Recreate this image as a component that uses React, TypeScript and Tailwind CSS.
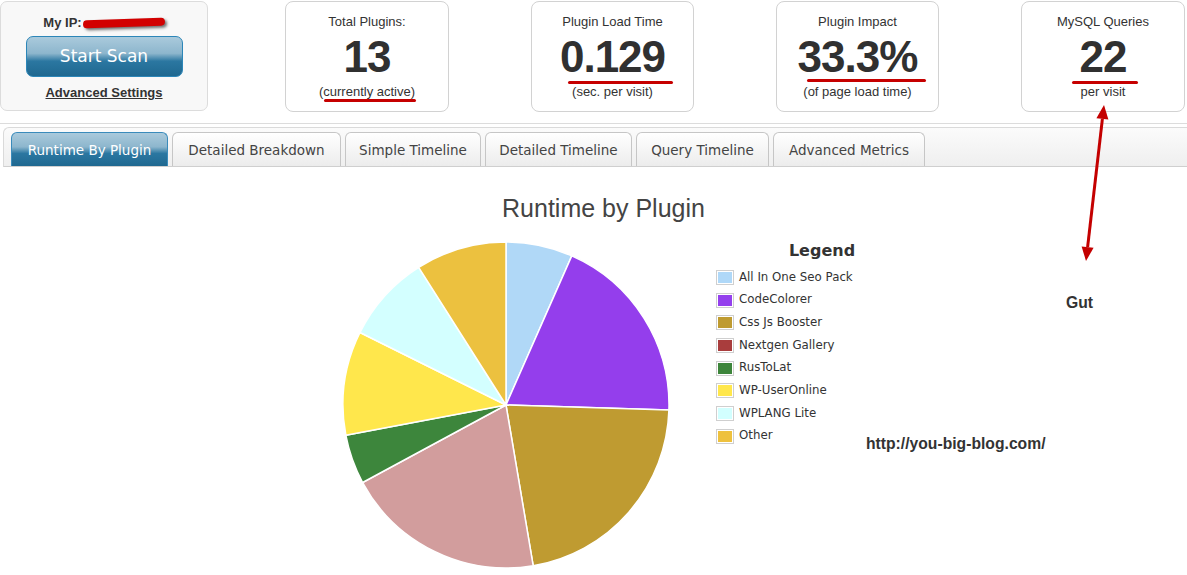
import React from "react";

type Stat = {
  title: string;
  value: string;
  note: string;
  width: string;
  gap: string;
  mark: string;
};

const STATS: Stat[] = [
  { title: "Total Plugins:", value: "13", note: "(currently active)", width: "w-[164px]", gap: "ml-[77px]", mark: "left-[38px] top-[97px] w-[92px]" },
  { title: "Plugin Load Time", value: "0.129", note: "(sec. per visit)", width: "w-[163px]", gap: "ml-[82px]", mark: "left-[36px] top-[79px] w-[105px]" },
  { title: "Plugin Impact", value: "33.3%", note: "(of page load time)", width: "w-[163px]", gap: "ml-[82px]", mark: "left-[30px] top-[77px] w-[119px]" },
  { title: "MySQL Queries", value: "22", note: "per visit", width: "w-[164px]", gap: "ml-[82px]", mark: "left-[50px] top-[79px] w-[66px]" },
];

const TABS = [
  { label: "Runtime By Plugin", w: "w-[157px]" },
  { label: "Detailed Breakdown", w: "w-[169px]" },
  { label: "Simple Timeline", w: "w-[136px]" },
  { label: "Detailed Timeline", w: "w-[147px]" },
  { label: "Query Timeline", w: "w-[133px]" },
  { label: "Advanced Metrics", w: "w-[152px]" },
];

// end angle of each slice, clockwise from 12 o'clock
const SLICES = [
  { name: "All In One Seo Pack", color: "#b0d8f7", swatch: "bg-[#afd8f8]", end: 23.8 },
  { name: "CodeColorer", color: "#943eec", swatch: "bg-[#9440ed]", end: 91.8 },
  { name: "Css Js Booster", color: "#bf9b31", swatch: "bg-[#bf9b30]", end: 170.4 },
  { name: "Nextgen Gallery", color: "#d29d9d", swatch: "bg-[#a93d3d]", end: 241.6 },
  { name: "RusToLat", color: "#3d863c", swatch: "bg-[#3d853b]", end: 259.3 },
  { name: "WP-UserOnline", color: "#ffe74c", swatch: "bg-[#ffe74c]", end: 296.4 },
  { name: "WPLANG Lite", color: "#d3ffff", swatch: "bg-[#d2ffff]", end: 327.6 },
  { name: "Other", color: "#ecc13f", swatch: "bg-[#eec13e]", end: 360 },
];

const BLUE_GRADIENT =
  "bg-[linear-gradient(to_bottom,#aacadc_0%,#8db6cd_42%,#2b77a1_62%,#1f6890_100%)]";

function point(cx: number, cy: number, r: number, deg: number) {
  const a = (deg * Math.PI) / 180;
  return [cx + r * Math.sin(a), cy - r * Math.cos(a)];
}

function PieChart() {
  const cx = 165;
  const cy = 165;
  const r = 163;
  let start = 0;
  return (
    <svg width="330" height="330" viewBox="0 0 330 330" className="shrink-0">
      {SLICES.map((s) => {
        const [x1, y1] = point(cx, cy, r, start);
        const [x2, y2] = point(cx, cy, r, s.end);
        const large = s.end - start > 180 ? 1 : 0;
        const d = `M${cx},${cy} L${x1},${y1} A${r},${r} 0 ${large} 1 ${x2},${y2} Z`;
        start = s.end;
        return <path key={s.name} d={d} fill={s.color} stroke="#fff" strokeWidth="1.5" strokeLinejoin="round" />;
      })}
    </svg>
  );
}

function StatCard({ stat }: { stat: Stat }) {
  return (
    <div className={`relative ${stat.gap} ${stat.width} h-[111px] mt-px rounded-[8px] border border-[#d2d2d2] bg-white text-center text-[#333]`}>
      <div className="pt-[12px] text-[13px] leading-[16px]">{stat.title}</div>
      <div className="mt-[5px] text-[44px] leading-[44px] font-bold tracking-[-1px] text-[#303030]">{stat.value}</div>
      <div className="mt-[5px] text-[13px] leading-[16px]">{stat.note}</div>
      <span className={`absolute ${stat.mark} h-[3px] rounded-full bg-[#c60000]`} />
    </div>
  );
}

export default function App() {
  return (
    <div className="relative w-[1187px] h-[575px] overflow-hidden bg-white font-['Liberation_Sans',Arial,sans-serif] text-[#333]">
      {/* stats row */}
      <div className="flex items-start h-[123px]">
        <div className="w-[208px] h-[110px] mt-px rounded-[7px] border border-[#dcdcdc] bg-[#f8f8f8] flex flex-col items-center">
          <div className="mt-[13px] flex items-center text-[13px] leading-[16px] font-bold">
            <span>My IP:</span>
            <span className="ml-[1px] inline-block w-[82px] h-[8px] -rotate-[2deg] rounded-sm bg-[#d20000] shadow-[2px_2px_3px_rgba(0,0,0,0.55)]" />
          </div>
          <button className={`mt-[5px] w-[157px] h-[41px] rounded-[7px] border border-[#2c86b8] ${BLUE_GRADIENT} text-white text-[17px] font-['DejaVu_Sans',Verdana,sans-serif]`}>
            Start Scan
          </button>
          <a className="mt-[8px] text-[13px] leading-[16px] font-bold underline text-[#333]">Advanced Settings</a>
        </div>
        {STATS.map((s) => (
          <StatCard key={s.title} stat={s} />
        ))}
      </div>

      {/* tab strip */}
      <div className="border-t border-[#dcdcdc]">
        <div className="ml-[3px] mt-[3px] rounded-tl-[6px] border-l border-t border-b border-[#dadada] border-b-[#cfcfcf] bg-[linear-gradient(to_bottom,#fbfbfb,#efefef)] pt-[4px] pl-[7px] flex gap-[4px] font-['DejaVu_Sans',Verdana,sans-serif] text-[13.5px]">
          {TABS.map((t, i) => (
            <div
              key={t.label}
              className={`${t.w} h-[34px] leading-[34px] text-center rounded-t-[6px] border border-b-0 ${
                i === 0
                  ? `border-[#3a8bbb] ${BLUE_GRADIENT} text-white`
                  : "border-[#c6c6c6] bg-[linear-gradient(to_bottom,#ffffff,#ececec)] text-[#444]"
              }`}
            >
              {t.label}
            </div>
          ))}
        </div>
      </div>

      {/* chart */}
      <div className="pt-[27px]">
        <h2 className="pl-[20px] text-center text-[25px] leading-[29px] text-[#444]">Runtime by Plugin</h2>
        <div className="mt-[17px] flex items-start pl-[341px]">
          <PieChart />
          <div className="ml-[45px] w-[212px] font-['DejaVu_Sans',Verdana,sans-serif]">
            <div className="mt-px text-center text-[16px] leading-[20px] font-bold text-[#333]">Legend</div>
            <ul className="mt-[5px]">
              {SLICES.map((s) => (
                <li key={s.name} className="flex items-center h-[22.7px] text-[11.8px] text-[#333]">
                  <span className="w-[18px] h-[15px] border border-[#cfcfcf] p-[1px] bg-white">
                    <span className={`block w-full h-full ${s.swatch}`} />
                  </span>
                  <span className="ml-[5px]">{s.name}</span>
                </li>
              ))}
            </ul>
          </div>
        </div>
      </div>

      {/* notes drawn over the page */}
      <div className="absolute left-[1066px] top-[294px] text-[15.7px] leading-[18px] font-bold text-[#333]">Gut</div>
      <div className="absolute left-[866px] top-[435px] text-[15.7px] leading-[18px] font-bold text-[#333]">http://you-big-blog.com/</div>
      <svg className="absolute left-[1075px] top-[100px] pointer-events-none" width="40" height="170" viewBox="0 0 40 170">
        <line x1="27.4" y1="18.9" x2="12.6" y2="147.1" stroke="#c40000" strokeWidth="3" />
        <polygon points="29,5 33.4,19.6 21.4,18.2" fill="#c40000" />
        <polygon points="11,161 18.6,147.8 6.6,146.4" fill="#c40000" />
      </svg>
    </div>
  );
}
